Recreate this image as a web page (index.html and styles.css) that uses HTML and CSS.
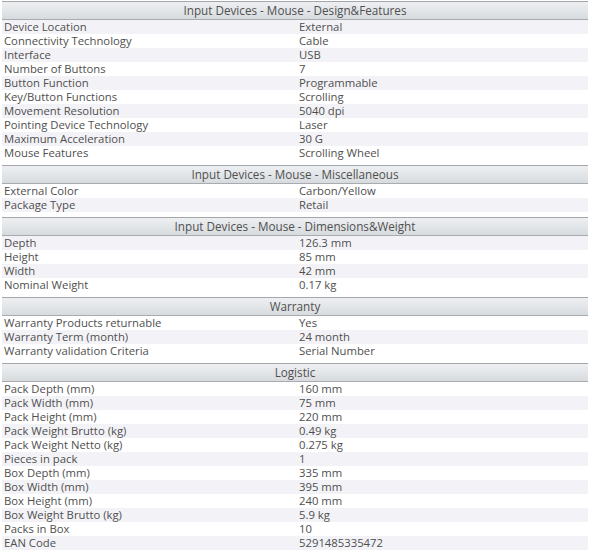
FILE: index.html
```html
<!DOCTYPE html>
<html>
<head>
<meta charset="utf-8">
<link rel="stylesheet" href="styles.css">
</head>
<body>
<div class="specs">
  <section class="sec">
    <div class="head">Input Devices - Mouse - Design&amp;Features</div>
    <div class="row alt"><span class="k">Device Location</span><span class="v">External</span></div>
    <div class="row"><span class="k">Connectivity Technology</span><span class="v">Cable</span></div>
    <div class="row alt"><span class="k">Interface</span><span class="v">USB</span></div>
    <div class="row"><span class="k">Number of Buttons</span><span class="v">7</span></div>
    <div class="row alt"><span class="k">Button Function</span><span class="v">Programmable</span></div>
    <div class="row"><span class="k">Key/Button Functions</span><span class="v">Scrolling</span></div>
    <div class="row alt"><span class="k">Movement Resolution</span><span class="v">5040 dpi</span></div>
    <div class="row"><span class="k">Pointing Device Technology</span><span class="v">Laser</span></div>
    <div class="row alt"><span class="k">Maximum Acceleration</span><span class="v">30 G</span></div>
    <div class="row"><span class="k">Mouse Features</span><span class="v">Scrolling Wheel</span></div>
  </section>
  <section class="sec">
    <div class="head">Input Devices - Mouse - Miscellaneous</div>
    <div class="row"><span class="k">External Color</span><span class="v">Carbon/Yellow</span></div>
    <div class="row alt"><span class="k">Package Type</span><span class="v">Retail</span></div>
  </section>
  <section class="sec">
    <div class="head">Input Devices - Mouse - Dimensions&amp;Weight</div>
    <div class="row alt"><span class="k">Depth</span><span class="v">126.3 mm</span></div>
    <div class="row"><span class="k">Height</span><span class="v">85 mm</span></div>
    <div class="row alt"><span class="k">Width</span><span class="v">42 mm</span></div>
    <div class="row"><span class="k">Nominal Weight</span><span class="v">0.17 kg</span></div>
  </section>
  <section class="sec">
    <div class="head">Warranty</div>
    <div class="row"><span class="k">Warranty Products returnable</span><span class="v">Yes</span></div>
    <div class="row alt"><span class="k">Warranty Term (month)</span><span class="v">24 month</span></div>
    <div class="row"><span class="k">Warranty validation Criteria</span><span class="v">Serial Number</span></div>
  </section>
  <section class="sec">
    <div class="head">Logistic</div>
    <div class="row"><span class="k">Pack Depth (mm)</span><span class="v">160 mm</span></div>
    <div class="row alt"><span class="k">Pack Width (mm)</span><span class="v">75 mm</span></div>
    <div class="row"><span class="k">Pack Height (mm)</span><span class="v">220 mm</span></div>
    <div class="row alt"><span class="k">Pack Weight Brutto (kg)</span><span class="v">0.49 kg</span></div>
    <div class="row"><span class="k">Pack Weight Netto (kg)</span><span class="v">0.275 kg</span></div>
    <div class="row alt"><span class="k">Pieces in pack</span><span class="v">1</span></div>
    <div class="row"><span class="k">Box Depth (mm)</span><span class="v">335 mm</span></div>
    <div class="row alt"><span class="k">Box Width (mm)</span><span class="v">395 mm</span></div>
    <div class="row"><span class="k">Box Height (mm)</span><span class="v">240 mm</span></div>
    <div class="row alt"><span class="k">Box Weight Brutto (kg)</span><span class="v">5.9 kg</span></div>
    <div class="row"><span class="k">Packs in Box</span><span class="v">10</span></div>
    <div class="row alt"><span class="k">EAN Code</span><span class="v">5291485335472</span></div>
  </section>
</div>
</body>
</html>
```
FILE: styles.css
```css
html, body {
  margin: 0;
  padding: 0;
  background: #ffffff;
}
body {
  font-family: "Open Sans", "Noto Sans", sans-serif;
  font-size: 11.3px;
  color: #4f4f4f;
}
.specs {
  width: 586px;
  padding: 1px 0 0 2px;
}
.sec + .sec {
  margin-top: 5px;
}
.head {
  height: 17px;
  line-height: 17px;
  font-size: 11.7px;
  text-align: center;
  color: #505050;
  border-top: 1px solid #a3a6aa;
  border-bottom: 1px solid #a8abaf;
  background: linear-gradient(to bottom, #edeff1 0%, #e3e6e9 50%, #d8dbde 100%);
}
.row {
  display: grid;
  grid-template-columns: 295px 1fr;
  height: 14px;
  line-height: 14px;
  white-space: nowrap;
}
.row.alt {
  background: #f3f3f7;
}
.k {
  padding-left: 2px;
}
.v {
  padding-left: 2px;
}
```
